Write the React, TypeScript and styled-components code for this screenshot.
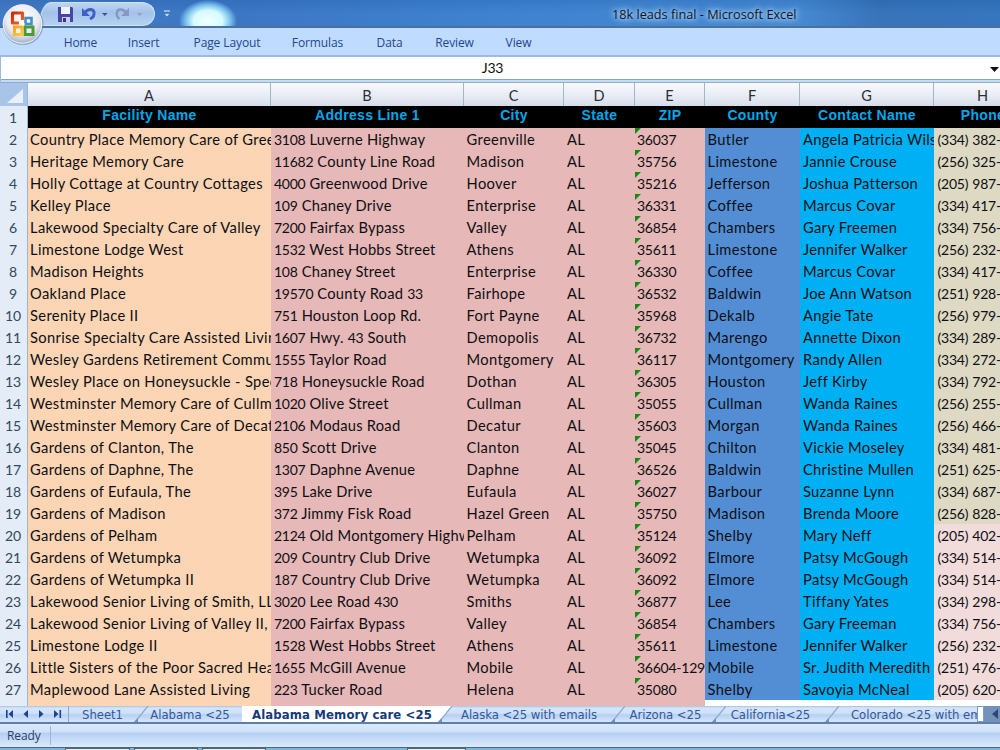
import React from "react";
import styled, { createGlobalStyle, css } from "styled-components";

const GlobalStyle = createGlobalStyle`
  html, body { margin: 0; padding: 0; overflow: hidden; }
  *, *::before, *::after { box-sizing: border-box; }
`;

const Window = styled.div`
  width: 1000px;
  height: 750px;
  display: flex;
  flex-direction: column;
  overflow: hidden;
  background: #fff;
  font-family: "Open Sans", sans-serif;
`;

const TitleBar = styled.header`
  position: relative;
  height: 28px;
  flex: none;
  display: flex;
  align-items: flex-start;
  border-bottom: 2px solid #4b7099;
  background:
    radial-gradient(ellipse 29px 21px at 208px 21px, #effffe 0%, #d6fbff 50%, rgba(140, 215, 250, 0.75) 78%, rgba(80, 150, 220, 0) 100%),
    linear-gradient(180deg, rgba(20, 60, 130, 0.12), rgba(255, 255, 255, 0.02) 50%),
    linear-gradient(90deg, #3f79c3 0%, #3874c3 24%, #3b80cf 50%, #4287d1 80%, #3371b8 88%, #3273bc 100%);
`;

const QuickAccess = styled.div`
  display: flex;
  align-items: center;
  height: 24px;
  width: 116px;
  margin: 2px 0 0 39px;
  padding-left: 18px;
  border: 1px solid #cde2f8;
  border-radius: 12px 13px 13px 0 / 24px 12px 12px 0;
  background: linear-gradient(180deg, #bcd4f0, #a3c2e9 45%, #b6d2f2);
`;

const Customize = styled.div`
  margin: 10px 0 0 8px;
  height: 8px;
  display: flex;
`;

const Title = styled.h1`
  margin: 0 0 0 440px;
  font-size: 12.7px;
  font-weight: 400;
  line-height: 29px;
  white-space: nowrap;
  color: #10151f;
  text-shadow: 0 0 4px #b4d8fc, 0 0 7px #b0d6fa, 0 0 10px #9cc9f6;
`;

const OfficeButton = styled.div`
  position: absolute;
  z-index: 3;
  left: 1px;
  top: 3px;
  width: 43px;
  height: 43px;
`;

const Ribbon = styled.nav`
  height: 29px;
  flex: none;
  display: flex;
  align-items: center;
  padding-left: 48px;
  background: #bfdbff;
  border-bottom: 2px solid #9dbbe0;
`;

const RibbonTab = styled.span<{ $w: number }>`
  width: ${(p) => p.$w}px;
  flex: none;
  text-align: center;
  font-size: 12px;
  letter-spacing: -0.1px;
  line-height: 28px;
  padding-top: 2px;
  color: #23478e;
  white-space: nowrap;
`;

const FormulaBar = styled.div`
  height: 26px;
  flex: none;
  display: flex;
  align-items: center;
  border-left: 1px solid #9dbbe0;
  background: linear-gradient(180deg, #fff 22px, #86a4c9 22px, #86a4c9 23px, #c6dcf5 23px, #c6dcf5 25px, #8fabcd 25px);
`;

const NameBox = styled.span`
  flex: 1;
  padding: 0 6px 4px 0;
  text-align: center;
  font: 14px/20px Lato, sans-serif;
  letter-spacing: -0.2px;
  color: #111;
`;

const DropArrow = styled.svg`
  margin: 0 1px 2px 0;
`;

const columns = "28px 243px 193px 100px 71px 70px 95px 134px 98px";

const Sheet = styled.main`
  height: 623px;
  flex: none;
  overflow: hidden;
`;

const HeadRow = styled.div`
  display: grid;
  grid-template-columns: ${columns};
  height: 23px;
  border-bottom: 1px solid #77889f;
`;

const Corner = styled.div`
  background: #a9c4e9;
  border-right: 1px solid #9eb6ce;
  display: flex;
  align-items: flex-end;
  justify-content: flex-end;
  padding: 0 4px 4px 0;
`;

const ColumnLetter = styled.div`
  background: linear-gradient(180deg, #f8fafd, #e9edf4 50%, #d3dbe9);
  border-right: 1px solid #9eb6ce;
  text-align: center;
  font: 14.5px/23px Lato, sans-serif;
  padding-top: 1px;
  color: #2b3038;
`;

const Row = styled.div`
  display: grid;
  grid-template-columns: ${columns};
  height: 22px;
`;

const RowNumber = styled.div`
  background: #e4ecf7;
  border-right: 1px solid #9eb6ce;
  border-bottom: 1px solid #9eb6ce;
  text-align: center;
  font: 14px/23px Lato, sans-serif;
  letter-spacing: -0.2px;
  padding-right: 1px;
  color: #2f4961;
`;

const FieldName = styled.div`
  background: #000;
  color: #00a8ea;
  text-align: center;
  font: bold 14px/19px "Liberation Sans", Arial, sans-serif;
  letter-spacing: 0.32px;
  white-space: nowrap;
  overflow: hidden;
`;

const Cell = styled.div<{ $bg: string; $flag?: boolean; $pad?: number; $track?: number }>`
  position: relative;
  overflow: hidden;
  white-space: nowrap;
  background: ${(p) => p.$bg};
  padding-left: ${(p) => p.$pad ?? 2}px;
  font: 14.7px/22px Lato, sans-serif;
  letter-spacing: ${(p) => p.$track ?? 0.35}px;
  color: #0e0f13;
  ${(p) =>
    p.$flag &&
    css`
      &::before {
        content: "";
        position: absolute;
        left: 0;
        top: 0;
        border-top: 6px solid #138a13;
        border-right: 6px solid transparent;
      }
    `}
`;

const Digits = styled.span`
  font-size: 14px;
  letter-spacing: -0.25px;
`;

const TabStrip = styled.div`
  height: 18px;
  flex: none;
  display: flex;
  border-bottom: 2px solid #5d7fae;
  background: linear-gradient(180deg, #a9c3e4 0, #d4e5fa 2px, #cfe2fa 7px, #b6d0f2 9px, #d3e4fa 15px);
`;

const TabNav = styled.div`
  width: 69px;
  display: flex;
  align-items: center;
  border-right: 1px solid #8ba9d0;
`;

const SheetTab = styled.div<{ $w: number; $active?: boolean; $left?: number; $right?: number }>`
  width: ${(p) => p.$w}px;
  flex: none;
  overflow: hidden;
  text-align: center;
  white-space: nowrap;
  padding-left: ${(p) => p.$left ?? 0}px;
  padding-right: ${(p) => p.$right ?? 0}px;
  font: ${(p) => (p.$active ? "bold" : "normal")} 13px/18px "DejaVu Sans Condensed", "DejaVu Sans", sans-serif;
  letter-spacing: ${(p) => (p.$active ? "0.12px" : "-0.05px")};
  color: ${(p) => (p.$active ? "#153a7d" : "#34579a")};
  background: ${(p) => (p.$active ? "#fff" : "transparent")};
`;

const Slant = styled.svg`
  flex: none;
`;

const ScrollHead = styled.div`
  flex: 1;
  display: flex;
  align-items: center;
  background: #7391bd;
`;

const SplitHandle = styled.div`
  width: 7px;
  height: 16px;
  background: #fff;
  border: 1px solid #7f9cc4;
  margin-right: 8px;
`;

const StatusBar = styled.footer`
  height: 23px;
  flex: none;
  display: flex;
  align-items: center;
  background: linear-gradient(180deg, #dbe8fa, #cfe1f9 8px, #b3cff3 9px, #c5dbf7 15px, #dceafb 23px);
`;

const StatusText = styled.span`
  width: 51px;
  height: 19px;
  padding-left: 7px;
  border-right: 1px solid #9ab6dc;
  font-size: 12px;
  line-height: 20px;
  letter-spacing: -0.1px;
  color: #2a3f68;
`;

const Taskbar = styled.div`
  height: 4px;
  flex: none;
  display: flex;
  border-top: 1px solid #44678a;
  background: #80b5d6;
  padding-left: 65px;
  gap: 4px;
`;

const TaskItem = styled.div<{ $w: number; $gap?: number }>`
  width: ${(p) => p.$w}px;
  margin-left: ${(p) => p.$gap ?? 0}px;
  border: 1px solid #53616b;
  border-bottom: 0;
  background: #e9f3f7;
`;

const ribbonTabs: [string, number][] = [
  ["Home", 65],
  ["Insert", 61],
  ["Page Layout", 106],
  ["Formulas", 75],
  ["Data", 69],
  ["Review", 61],
  ["View", 67],
];

const fields: [string, string][] = [
  ["A", "Facility Name"],
  ["B", "Address Line 1"],
  ["C", "City"],
  ["D", "State"],
  ["E", "ZIP"],
  ["F", "County"],
  ["G", "Contact Name"],
  ["H", "Phone"],
];

const records: string[][] = [
  ["Country Place Memory Care of Greenville", "3108 Luverne Highway", "Greenville", "36037", "Butler", "Angela Patricia Wilson", "(334) 382-"],
  ["Heritage Memory Care", "11682 County Line Road", "Madison", "35756", "Limestone", "Jannie Crouse", "(256) 325-"],
  ["Holly Cottage at Country Cottages", "4000 Greenwood Drive", "Hoover", "35216", "Jefferson", "Joshua Patterson", "(205) 987-"],
  ["Kelley Place", "109 Chaney Drive", "Enterprise", "36331", "Coffee", "Marcus Covar", "(334) 417-"],
  ["Lakewood Specialty Care of Valley", "7200 Fairfax Bypass", "Valley", "36854", "Chambers", "Gary Freemen", "(334) 756-"],
  ["Limestone Lodge West", "1532 West Hobbs Street", "Athens", "35611", "Limestone", "Jennifer Walker", "(256) 232-"],
  ["Madison Heights", "108 Chaney Street", "Enterprise", "36330", "Coffee", "Marcus Covar", "(334) 417-"],
  ["Oakland Place", "19570 County Road 33", "Fairhope", "36532", "Baldwin", "Joe Ann Watson", "(251) 928-"],
  ["Serenity Place II", "751 Houston Loop Rd.", "Fort Payne", "35968", "Dekalb", "Angie Tate", "(256) 979-"],
  ["Sonrise Specialty Care Assisted Living", "1607 Hwy. 43 South", "Demopolis", "36732", "Marengo", "Annette Dixon", "(334) 289-"],
  ["Wesley Gardens Retirement Community", "1555 Taylor Road", "Montgomery", "36117", "Montgomery", "Randy Allen", "(334) 272-"],
  ["Wesley Place on Honeysuckle - Specialty", "718 Honeysuckle Road", "Dothan", "36305", "Houston", "Jeff Kirby", "(334) 792-"],
  ["Westminster Memory Care of Cullman", "1020 Olive Street", "Cullman", "35055", "Cullman", "Wanda Raines", "(256) 255-"],
  ["Westminster Memory Care of Decatur", "2106 Modaus Road", "Decatur", "35603", "Morgan", "Wanda Raines", "(256) 466-"],
  ["Gardens of Clanton, The", "850 Scott Drive", "Clanton", "35045", "Chilton", "Vickie Moseley", "(334) 481-"],
  ["Gardens of Daphne, The", "1307 Daphne Avenue", "Daphne", "36526", "Baldwin", "Christine Mullen", "(251) 625-"],
  ["Gardens of Eufaula, The", "395 Lake Drive", "Eufaula", "36027", "Barbour", "Suzanne Lynn", "(334) 687-"],
  ["Gardens of Madison", "372 Jimmy Fisk Road", "Hazel Green", "35750", "Madison", "Brenda Moore", "(256) 828-"],
  ["Gardens of Pelham", "2124 Old Montgomery Highway", "Pelham", "35124", "Shelby", "Mary Neff", "(205) 402-"],
  ["Gardens of Wetumpka", "209 Country Club Drive", "Wetumpka", "36092", "Elmore", "Patsy McGough", "(334) 514-"],
  ["Gardens of Wetumpka II", "187 Country Club Drive", "Wetumpka", "36092", "Elmore", "Patsy McGough", "(334) 514-"],
  ["Lakewood Senior Living of Smith, LLC", "3020 Lee Road 430", "Smiths", "36877", "Lee", "Tiffany Yates", "(334) 298-"],
  ["Lakewood Senior Living of Valley II, LLC", "7200 Fairfax Bypass", "Valley", "36854", "Chambers", "Gary Freeman", "(334) 756-"],
  ["Limestone Lodge II", "1528 West Hobbs Street", "Athens", "35611", "Limestone", "Jennifer Walker", "(256) 232-"],
  ["Little Sisters of the Poor Sacred Heart", "1655 McGill Avenue", "Mobile", "36604-129", "Mobile", "Sr. Judith Meredith", "(251) 476-"],
  ["Maplewood Lane Assisted Living", "223 Tucker Road", "Helena", "35080", "Shelby", "Savoyia McNeal", "(205) 620-"],
];

const peach = "#fcd5b4";
const rose = "#e6b8b7";
const blue = "#538ed5";
const sky = "#00b0f4";
const tan = "#ddd9c3";
const blush = "#f2dcdb";

function Value({ text }: { text: string }) {
  return (
    <>
      {text.split(/(\(?\d[\d\-()]*)/).map((part, i) => (i % 2 ? <Digits key={i}>{part}</Digits> : part))}
    </>
  );
}

function OfficeLogo() {
  return (
    <svg width="43" height="43" viewBox="0 0 43 43">
      <defs>
        <radialGradient id="orb" cx="50%" cy="35%" r="65%">
          <stop offset="0" stopColor="#ffffff" />
          <stop offset="0.65" stopColor="#e8eaf0" />
          <stop offset="1" stopColor="#a6b0c4" />
        </radialGradient>
        <linearGradient id="red" x2="1" y2="1">
          <stop offset="0" stopColor="#c92d0b" />
          <stop offset="1" stopColor="#f26a25" />
        </linearGradient>
        <linearGradient id="gold" x2="1" y2="1">
          <stop offset="0" stopColor="#f7a41c" />
          <stop offset="1" stopColor="#fbcf3a" />
        </linearGradient>
      </defs>
      <circle cx="22" cy="21.5" r="20.5" fill="#5d7ba8" opacity="0.55" />
      <circle cx="21.5" cy="21" r="19.3" fill="url(#orb)" stroke="#f4f7fc" strokeWidth="1" />
      <rect x="24.5" y="15" width="6" height="6" fill="none" stroke="#3f8fd0" strokeWidth="2.6" />
      <rect x="24" y="24" width="8" height="7.5" fill="none" stroke="#4a9a3c" strokeWidth="3" />
      <rect x="13.5" y="24" width="7.5" height="7.5" fill="none" stroke="url(#gold)" strokeWidth="3" />
      <path d="M18 20h-6.500v-10h10v7" fill="none" stroke="url(#red)" strokeWidth="3.2" strokeLinejoin="round" />
      <path d="M22 19v4M20 21h4" stroke="#fff" strokeWidth="1.2" />
    </svg>
  );
}

function QuickIcons() {
  return (
    <svg width="92" height="20" viewBox="0 0 92 20">
      <path d="M0 3h14l1 1v14H0z" fill="#4646a8" />
      <path d="M3 3h9v7H3z" fill="#edf2fc" />
      <path d="M4 13h8v5H4z" fill="#c9cfeb" />
      <path d="M5 14h3v4H5z" fill="#34348c" />
      <path d="M24 4v8h8z" fill="#3c62c6" />
      <path d="M27 8.500c3-4 8-4 9-.5.7 3-1 5.500-4 7" fill="none" stroke="#3c62c6" strokeWidth="2.900" />
      <path d="M44 9h5.500l-2.700 3z" fill="#34568e" />
      <path d="M71 4v8h-8z" fill="#8398c2" />
      <path d="M68 8.500c-3-4-8-4-9-.5-.7 3 .5 5.500 2.500 7" fill="none" stroke="#8398c2" strokeWidth="2.500" />
      <path d="M79 9h5.500l-2.700 3z" fill="#a39db2" />
    </svg>
  );
}

function TabSlant({ active }: { active?: boolean }) {
  return (
    <Slant width="14" height="16" viewBox="0 0 14 16">
      {active && <path d="M0 0H14L1 16H0z" fill="#fff" />}
      <path d="M14 0 1 16" stroke="#8ba9d0" strokeWidth="1.2" />
      <path d="M0 16l4-4v4z" fill="#6f90be" />
    </Slant>
  );
}

export default function App() {
  return (
    <Window>
      <GlobalStyle />
      <TitleBar>
        <OfficeButton>
          <OfficeLogo />
        </OfficeButton>
        <QuickAccess>
          <QuickIcons />
        </QuickAccess>
        <Customize>
          <svg width="9" height="8" viewBox="0 0 9 8">
            <path d="M1 1h6" stroke="#c8def8" strokeWidth="1.2" />
            <path d="M1 3.500h6L4 7z" fill="#c8def8" stroke="#2a5896" strokeWidth=".5" />
          </svg>
        </Customize>
        <Title>18k leads final - Microsoft Excel</Title>
      </TitleBar>
      <Ribbon>
        {ribbonTabs.map(([label, w]) => (
          <RibbonTab key={label} $w={w}>{label}</RibbonTab>
        ))}
      </Ribbon>
      <FormulaBar>
        <NameBox>J33</NameBox>
        <DropArrow width="9" height="5" viewBox="0 0 9 5">
          <path d="M0 0h9L4.500 5z" fill="#111" />
        </DropArrow>
      </FormulaBar>
      <Sheet>
        <HeadRow>
          <Corner>
            <svg width="16" height="14">
              <path d="M16 0v14H0z" fill="#e8f0fa" />
            </svg>
          </Corner>
          {fields.map(([letter]) => (
            <ColumnLetter key={letter}>{letter}</ColumnLetter>
          ))}
        </HeadRow>
        <Row>
          <RowNumber>1</RowNumber>
          {fields.map(([letter, name]) => (
            <FieldName key={letter}>{name}</FieldName>
          ))}
        </Row>
        {records.map(([facility, address, city, zip, county, contact, phone], i) => (
          <Row key={i}>
            <RowNumber>{i + 2}</RowNumber>
            <Cell $bg={peach}>{facility}</Cell>
            <Cell $bg={rose} $pad={3} $track={0.25}><Value text={address} /></Cell>
            <Cell $bg={rose} $pad={2.600}>{city}</Cell>
            <Cell $bg={rose} $pad={3}>AL</Cell>
            <Cell $bg={rose} $flag><Value text={zip} /></Cell>
            <Cell $bg={blue} $pad={2.600}>{county}</Cell>
            <Cell $bg={sky} $pad={3} $track={0.3}>{contact}</Cell>
            <Cell $bg={i < 18 ? tan : blush} $pad={3.600}><Value text={phone} /></Cell>
          </Row>
        ))}
        <Row>
          <RowNumber />
          <Cell $bg={peach} />
          <Cell $bg={rose} />
          <Cell $bg={rose} />
          <Cell $bg={rose} />
          <Cell $bg={rose} />
          <Cell $bg="#fff" />
          <Cell $bg="#fff" />
          <Cell $bg="#fff" />
        </Row>
      </Sheet>
      <TabStrip>
        <TabNav>
          <svg width="68" height="12" viewBox="0 0 68 12">
            <path d="M6 2h1.600v8H6zM13 2v8L8.500 6zM28 2v8l-4.500-4zM39 2v8l4.500-4zM54 2v8l4.500-4zM59.500 2h1.600v8h-1.600z" fill="#1c4391" />
          </svg>
        </TabNav>
        <SheetTab $w={65} $left={2}>Sheet1</SheetTab>
        <TabSlant />
        <SheetTab $w={94} $right={10}>Alabama &lt;25</SheetTab>
        <SheetTab $w={196} $active $left={4}>Alabama Memory care &lt;25</SheetTab>
        <TabSlant active />
        <SheetTab $w={159} $right={5}>Alaska &lt;25 with emails</SheetTab>
        <TabSlant />
        <SheetTab $w={87} $right={6}>Arizona &lt;25</SheetTab>
        <TabSlant />
        <SheetTab $w={99} $right={10}>California&lt;25</SheetTab>
        <TabSlant />
        <SheetTab $w={138} $left={12}>Colorado &lt;25 with emails</SheetTab>
        <ScrollHead>
          <SplitHandle />
          <svg width="6" height="10">
            <path d="M6 0v10L0 5z" fill="#2d4770" />
          </svg>
        </ScrollHead>
      </TabStrip>
      <StatusBar>
        <StatusText>Ready</StatusText>
      </StatusBar>
      <Taskbar>
        <TaskItem $w={65} />
        <TaskItem $w={64} />
        <TaskItem $w={64} />
        <TaskItem $w={59} $gap={137} />
      </Taskbar>
    </Window>
  );
}
